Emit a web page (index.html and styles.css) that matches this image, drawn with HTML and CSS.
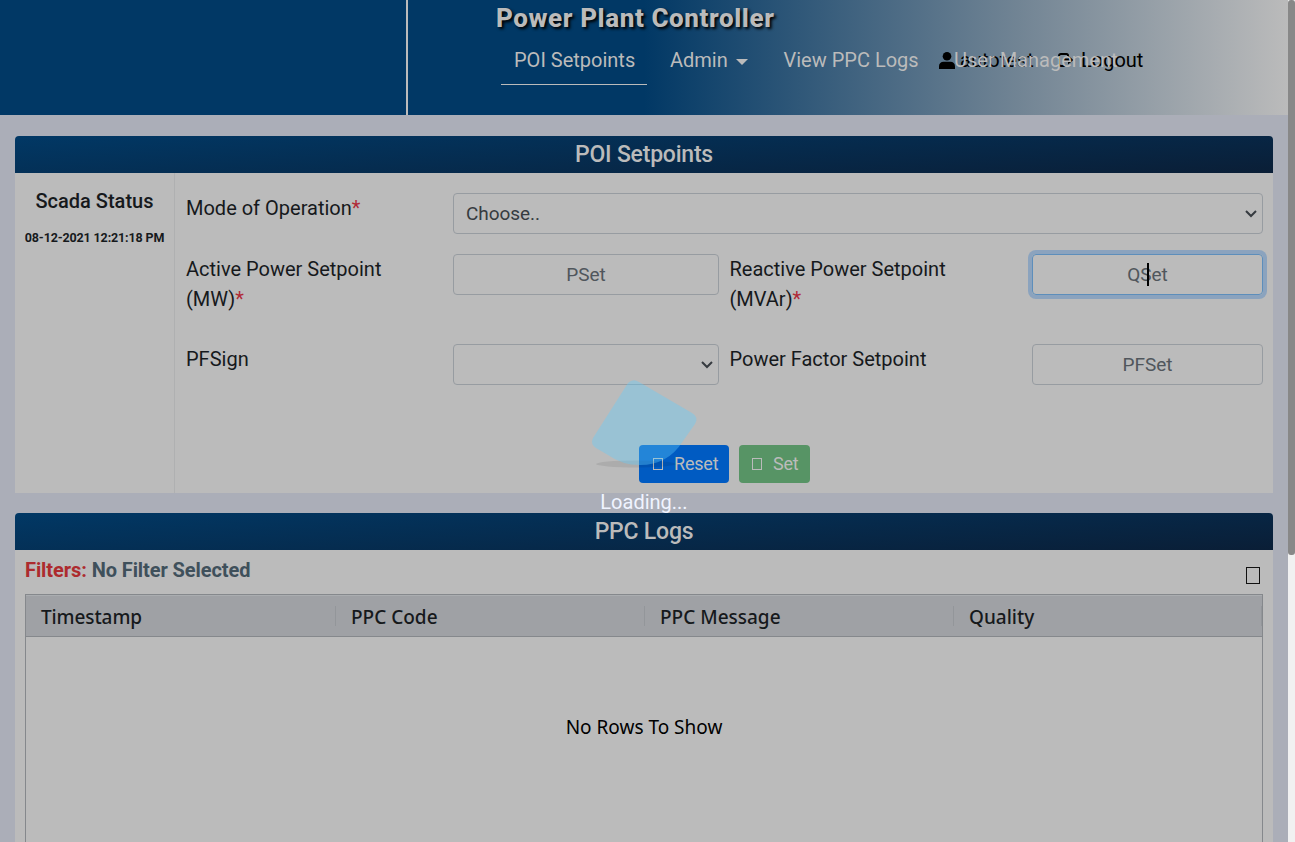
FILE: index.html
```html
<!DOCTYPE html>
<html lang="en">
<head>
<meta charset="utf-8">
<title>Power Plant Controller</title>
<link rel="stylesheet" href="styles.css">
</head>
<body>
<div class="app">
  <div class="page">
    <header class="header">
      <div class="logo-area"></div>
      <div class="header-main">
        <h1 class="title">Power Plant Controller</h1>
        <nav class="nav">
          <a class="nav-link active">POI Setpoints</a>
          <a class="nav-link admin">Admin<i class="caret"></i></a>
          <a class="nav-link logs">View PPC Logs</a>
          <span class="account">
            <svg class="user-icon" viewBox="0 0 16 17"><circle cx="8" cy="4.3" r="4.3"/><path d="M0 17v-2.8C0 11.600 2 9.800 4.500 9.800h7C14 9.800 16 11.600 16 14.200V17z"/></svg>
            <span class="username">autotest</span>
            <svg class="exit-icon" viewBox="0 0 16 16"><path d="M10 4V3.500a1.500 1.500 0 0 0-1.500-1.500H3a2 2 0 0 0-2 2v8a2 2 0 0 0 2 2h5" fill="none" stroke="#000" stroke-width="2"/><path d="M5 6.500h5V3.500L15.500 8 10 12.500v-3H5z"/></svg>
            <span class="logout">Logout</span>
            <a class="user-management">User Management</a>
          </span>
        </nav>
      </div>
    </header>
    <main class="content">
      <section class="panel">
        <h2 class="panel-title"><span>POI Setpoints</span></h2>
        <div class="panel-body setpoints">
          <aside class="status">
            <div class="status-name"><span>Scada Status</span></div>
            <div class="status-time"><span>08-12-2021 12:21:18 PM</span></div>
          </aside>
          <div class="form">
            <div class="form-row mode">
              <label class="label"><span>Mode of Operation</span><b>*</b></label>
              <div class="field select">Choose..<svg class="chevron" viewBox="0 0 12 8"><path d="M1 1l5 5 5-5"/></svg></div>
            </div>
            <div class="form-row power">
              <label class="label"><span>Active Power Setpoint</span><br>(MW)<b>*</b></label>
              <div class="field input">PSet</div>
              <label class="label second"><span>Reactive Power Setpoint</span><br>(MVAr)<b>*</b></label>
              <div class="field input focused">QSet<i class="cursor"></i></div>
            </div>
            <div class="form-row factor">
              <label class="label">PFSign</label>
              <div class="field select"><svg class="chevron" viewBox="0 0 12 8"><path d="M1 1l5 5 5-5"/></svg></div>
              <label class="label second"><span>Power Factor Setpoint</span></label>
              <div class="field input">PFSet</div>
            </div>
            <div class="actions">
              <button class="button reset"><i class="glyph"></i>Reset</button>
              <button class="button set"><i class="glyph"></i>Set</button>
            </div>
          </div>
        </div>
      </section>
      <section class="panel logs-panel">
        <h2 class="panel-title"><span>PPC Logs</span></h2>
        <div class="panel-body">
          <div class="filters"><div class="filter-text"><em>Filters:</em> No Filter Selected</div><i class="glyph export"></i></div>
          <div class="grid">
            <div class="grid-head">
              <div class="cell">Timestamp</div><div class="cell">PPC Code</div><div class="cell">PPC Message</div><div class="cell">Quality</div>
            </div>
            <div class="grid-empty">No Rows To Show</div>
          </div>
        </div>
      </section>
    </main>
  </div>
  <div class="scrollbar"><div class="thumb"></div></div>
  <div class="loader">
    <svg class="loader-shape" viewBox="0 0 110 92"><ellipse class="shadow" cx="46" cy="86" rx="40" ry="3.500"/><path class="leaf" d="M38 5Q43 0 49 4L102 35Q109 39 105 46L93 63Q78 87 50 87Q32 87 18 77L6 70Q0 66 3 60Z"/></svg>
    <div class="loading">Loading...</div>
  </div>
</div>
</body>
</html>
```
FILE: styles.css
```css
* { box-sizing: border-box; }
body { margin: 0; font: 20px/30px Roboto, sans-serif; color: #16191c; background: #abaeb8; overflow: hidden; }
h1, h2 { margin: 0; }
.app { position: relative; display: flex; width: 1295px; height: 842px; overflow: hidden; }
.page { width: 1288px; }
.header { display: flex; height: 115px; background: linear-gradient(90deg, #013865 50%, #718494 79%, #bbb 100%); }
.logo-area { width: 408px; border-right: 2px solid #bbb; }
.header-main { padding-left: 88px; }
.title { height: 36px; font-size: 26px; line-height: 37px; font-weight: 800; letter-spacing: .6px; color: #bbb; text-shadow: 2px 2px 3px #000; white-space: nowrap; }
.nav { display: flex; margin-left: 5px; color: #bbb; white-space: nowrap; }
.nav-link { height: 49px; line-height: 48px; }
.active { width: 146px; padding-left: 13px; border-bottom: 1px solid #bbb; }
.admin { display: flex; align-items: center; width: 114px; height: 48px; padding-left: 23px; }
.caret { margin: 4px 0 0 8px; border: 6px solid transparent; border-top-color: #bbb; border-bottom: 0; }
.logs { width: 178px; padding-left: 22.500px; }
.account { position: relative; display: flex; align-items: center; height: 48px; color: #000; }
.user-icon { width: 16px; height: 17px; margin-right: 5px; }
.username { width: 98px; }
.exit-icon { width: 16px; height: 16px; margin-right: 7px; }
.user-management { position: absolute; left: 15px; top: 9px; color: #bbb; }
.content { padding: 21px 15px 0; }
.panel { height: 357px; margin-bottom: 20px; }
.panel-title { height: 37px; line-height: 37px; text-align: center; font-size: 23px; font-weight: 500; letter-spacing: -.22px; color: #bbb; border-radius: 4px 4px 0 0; background: linear-gradient(176deg, #013865, #0a1e36); }
.panel-body { background: #bbb; }
.setpoints { display: flex; height: 320px; }
.status { width: 160px; padding-top: 13px; text-align: center; border-right: 1px solid #afb0b1; white-space: nowrap; }
.status-name { font-weight: 500; }
.status-time { margin-top: 7px; font-size: 12.500px; font-weight: 700; letter-spacing: -.14px; }
.form { width: 1098px; padding: 20px 10px 0 11px; }
.form-row { display: grid; grid-template-columns: 267px 266px 313px 231px; align-items: start; }
.mode { grid-template-columns: 267px 810px; height: 61px; }
.power { height: 90px; }
.factor { height: 101px; }
.label b { font-weight: 400; color: #b02a37; }
.second { padding-left: 10.500px; }
.field { position: relative; height: 41px; padding: 0 12px; line-height: 39px; font-size: 19px; letter-spacing: -.05px; border: 1px solid #979ca1; border-radius: 4px; color: #363b40; }
.input { text-align: center; color: #50565c; }
.focused { border-color: #5d8ebb; box-shadow: 0 0 0 4px #8ba3be; }
.chevron { position: absolute; right: 5px; top: 16px; width: 12px; height: 8px; fill: none; stroke: #363b40; stroke-width: 2; }
.cursor { position: absolute; left: 114px; top: 8px; width: 2px; height: 23px; background: #000; }
.actions { display: flex; gap: 10px; padding-left: 453px; }
.button { display: flex; align-items: center; height: 38px; padding: 0 0 1px 14px; border: 0; border-radius: 4px; color: #bbb; font: 18px Roboto, sans-serif; letter-spacing: -.2px; }
.reset { width: 90px; background: #005bc2; }
.set { width: 71px; background: #579465; padding-left: 13px; }
.glyph { width: 10px; height: 12px; margin: 1px 11px 0 0; border: 1px solid currentColor; }
.logs-panel { margin: 0; }
.logs-panel .panel-body { height: 330px; padding: 0 10px; }
.filters { display: flex; justify-content: space-between; height: 44px; line-height: 41px; padding-right: 3px; font-weight: 700; letter-spacing: -.08px; color: #3f505b; }
.filters em { font-style: normal; color: #ad2b2e; }
.export { width: 14px; height: 17px; margin: 17px 0 0; color: #111; }
.grid { width: 1238px; height: 300px; border: 1px solid #85888c; font-family: "Noto Sans", sans-serif; }
.grid-head { display: flex; height: 42px; align-items: center; border-top: 1px solid #aaadb0; border-bottom: 1px solid #85888c; background: #9fa1a5; font-size: 19px; font-weight: 500; }
.cell { width: 309px; height: 20px; line-height: 23px; padding-left: 15px; border-right: 1px solid #93969a; }
.cell:first-child { width: 310px; letter-spacing: -.1px; }
.cell:last-child { width: 308px; }
.grid-empty { padding-top: 75px; text-align: center; font-size: 19px; color: #000; }
.scrollbar { width: 7px; background: #f1f1f1; }
.thumb { height: 555px; border-radius: 3px; background: #888; }
.loader { position: absolute; left: 590px; top: 378px; width: 108px; text-align: center; }
.loader-shape { display: block; width: 110px; height: 92px; }
.shadow { fill: rgba(0, 0, 0, .08); }
.leaf { fill: rgba(96, 207, 255, .37); }
.loading { margin-top: 17px; color: #f0f4ff; }
```
